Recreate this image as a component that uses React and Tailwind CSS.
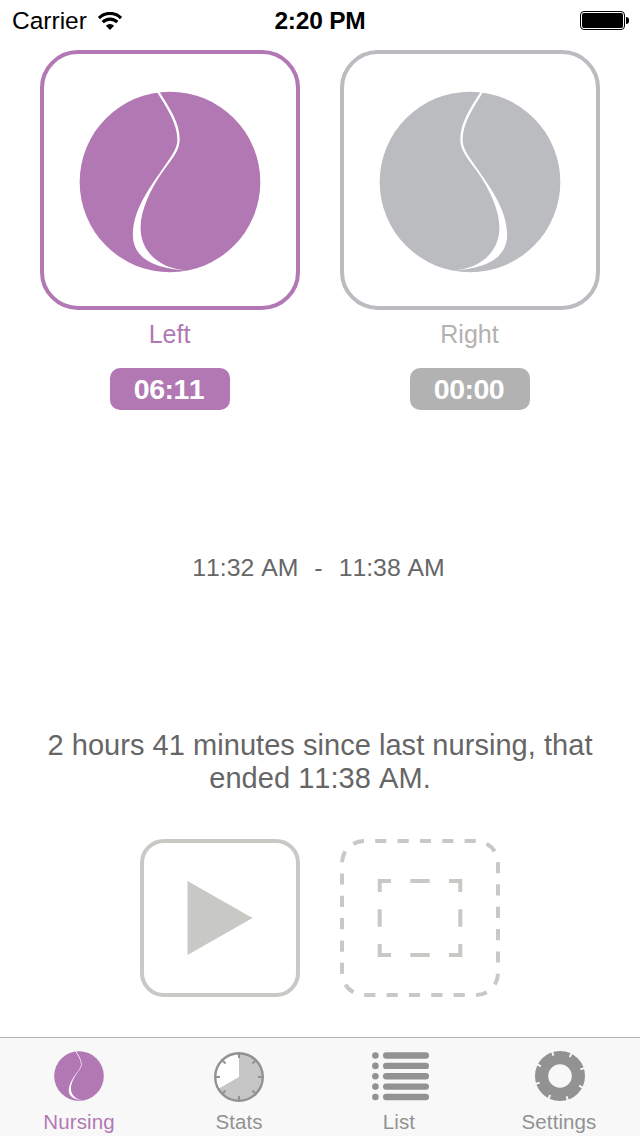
import React from "react";

const Seam = ({ className, flip }) => (
  <svg className={className} viewBox="0 0 544 544">
    <g transform={flip ? "translate(544 0) scale(-1 1)" : undefined}>
      <circle cx="272" cy="272" r="270" fill="currentColor" />
      <path
        fill="#fff"
        d="M231 0C262 50 294 96 294 146C294 176 272 200 245 240C205 298 161 360 161 430C161 500 225 532 327 537C240 533 184 480 184 408C184 355 215 292 248 244C276 205 301 180 301 144C301 96 272 52 239 0Z"
      />
    </g>
  </svg>
);

const StatusBar = () => (
  <header className="grid h-[41px] shrink-0 grid-cols-3 items-center text-[24.5px] leading-[41px] text-black">
    <div className="flex items-center gap-[10px] pl-3">
      <span className="w-[76px]">Carrier</span>
      <svg className="h-[18px] w-6" viewBox="0 0 24 18" fill="none" stroke="currentColor">
        <path d="M0.9 6A15.7 15.7 0 0 1 23.1 6" strokeWidth="3.2" />
        <path d="M4.7 10.2A10.3 10.3 0 0 1 19.3 10.2" strokeWidth="3.2" />
        <path d="M12 18L7.9 13.8A5.8 5.8 0 0 1 16.1 13.8Z" fill="currentColor" stroke="none" />
      </svg>
    </div>
    <span className="text-center font-bold tracking-[-0.2px]">2:20 PM</span>
    <div className="flex items-center justify-end pr-[11px]">
      <div className="h-[19px] w-[45px] rounded-[4px] border border-black p-px">
        <div className="h-full w-full rounded-[2px] bg-black"></div>
      </div>
      <div className="ml-px h-[7px] w-[3px] rounded-r-full bg-black"></div>
    </div>
  </header>
);

const Side = ({ label, time, flip, color, labelColor, pillColor }) => (
  <div className="flex w-[260px] flex-col items-center">
    <button
      className={`flex h-[260px] w-[260px] justify-center rounded-[38px] border-4 border-current pt-[37px] ${color}`}
    >
      <Seam className="h-[182px] w-[182px]" flip={flip} />
    </button>
    <span className={`mt-[10px] pr-px text-[25px] leading-7 ${labelColor}`}>{label}</span>
    <span
      className={`mt-5 h-[42px] w-[120px] rounded-[10px] pr-0.5 text-center text-[28.5px] leading-[42px] font-bold tracking-[-0.5px] text-white ${pillColor}`}
    >
      {time}
    </span>
  </div>
);

const Controls = () => (
  <div className="mt-[44px] flex justify-center gap-10 text-[#c8c9c5]">
    <button className="flex h-[158px] w-[160px] rounded-3xl border-4 border-current pt-[38px] pl-[43px]">
      <svg className="h-[74px] w-[66px]" viewBox="0 0 66 74" fill="currentColor">
        <path d="M0.5 0L65.5 37L0.5 74Z" />
      </svg>
    </button>
    <button>
      <svg className="h-[158px] w-[160px]" viewBox="0 0 160 158" fill="none" stroke="currentColor" strokeWidth="4">
        <rect x="2" y="2" width="156" height="154" rx="22" pathLength="52" strokeDasharray="1 1" strokeDashoffset="1" />
        <path d="M51 42H39.7V53M109 42H120.3V53M39.7 105V116H51M120.3 105V116H109" />
        <path d="M70.3 42H89.7M70.3 116H89.7M39.7 70.3V87.7M120.3 70.3V87.7" />
      </svg>
    </button>
  </div>
);

const ClockIcon = () => (
  <svg className="mt-px h-[50px] w-[50px]" viewBox="0 0 50 50">
    <circle cx="25" cy="25" r="23.7" fill="#fff" />
    <path d="M25 25V1.3A23.7 23.7 0 1 1 4.5 36.8Z" fill="#c6c6c6" />
    <g stroke="currentColor" fill="none">
      <circle cx="25" cy="25" r="23.8" strokeWidth="2.4" />
      {[0, 45, 90, 135, 180, 225, 270, 315].map((a) => (
        <path key={a} d="M25 2V6" strokeWidth="2" transform={`rotate(${a} 25 25)`} />
      ))}
    </g>
  </svg>
);

const ListIcon = () => (
  <svg className="ml-[3px] h-[50px] w-[57px]" viewBox="0 0 57 50" fill="currentColor">
    {[4.5, 14.9, 25.2, 35.6, 46].map((y) => (
      <g key={y}>
        <circle cx="3.4" cy={y} r="3.3" />
        <rect x="11" y={y - 3.2} width="46" height="6.4" rx="3.2" />
      </g>
    ))}
  </svg>
);

const GearIcon = () => (
  <svg className="ml-[2px] h-[50px] w-[50px]" viewBox="0 0 50 50">
    <circle cx="25" cy="25" r="18.4" fill="none" stroke="currentColor" strokeWidth="13.2" />
    {[-18, 27, 72, 117, 162, 207, 252, 297].map((a) => (
      <path key={a} d="M25 -1V3.6" stroke="#f8f8f8" strokeWidth="2" transform={`rotate(${a} 25 25)`} />
    ))}
  </svg>
);

const tabs = [
  { label: "Nursing", icon: <Seam className="h-[50px] w-[50px]" />, active: true },
  { label: "Stats", icon: <ClockIcon /> },
  { label: "List", icon: <ListIcon /> },
  { label: "Settings", icon: <GearIcon /> },
];

const TabBar = () => (
  <nav className="grid h-[99px] shrink-0 grid-cols-4 border-t border-[#b2b2b2] bg-[#f8f8f8]">
    {tabs.map((tab) => (
      <button
        key={tab.label}
        className={`flex flex-col items-center pt-[13px] pr-[2px] ${tab.active ? "text-[#b278b4]" : "text-[#929292]"}`}
      >
        <span className="flex h-[51px] items-start">{tab.icon}</span>
        <span className="mt-[10px] text-[20.5px] leading-5 tracking-[0.1px]">{tab.label}</span>
      </button>
    ))}
  </nav>
);

const App = () => {
  return (
    <div className="flex h-[1136px] w-[640px] flex-col overflow-hidden bg-white font-['Liberation_Sans',Arial,sans-serif] text-[#666] [font-kerning:none]">
      <StatusBar />
      <main className="flex-1 pt-[9px]">
        <div className="flex justify-center gap-10">
          <Side
            label="Left"
            time="06:11"
            color="text-[#b278b4]"
            labelColor="text-[#b278b4]"
            pillColor="bg-[#b278b4]"
          />
          <Side
            label="Right"
            time="00:00"
            flip
            color="text-[#bbbcc0]"
            labelColor="text-[#b2b2b2]"
            pillColor="bg-[#b2b2b2]"
          />
        </div>

        <p className="mt-[144px] flex justify-center gap-4 pr-[3px] text-[24.8px] leading-7">
          <span>11:32 AM</span>
          <span>-</span>
          <span>11:38 AM</span>
        </p>

        <p className="mt-[147px] text-center text-[29px] leading-[33px] tracking-[0.04px]">
          2 hours 41 minutes since last nursing, that
          <br />
          ended 11:38 AM.
        </p>

        <Controls />
      </main>
      <TabBar />
    </div>
  );
};

export default App;
